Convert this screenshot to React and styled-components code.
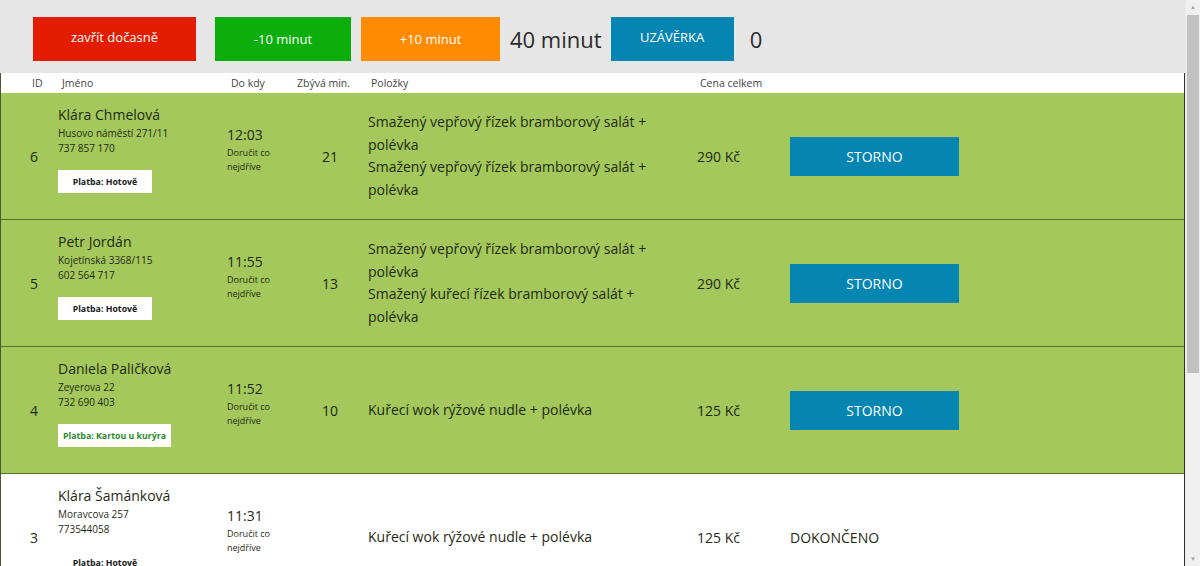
import styled, { createGlobalStyle } from "styled-components";

const GlobalStyle = createGlobalStyle`
  html, body {
    margin: 0;
    padding: 0;
    background: #ffffff;
    font-family: 'Open Sans', 'Noto Sans', sans-serif;
    color: #222;
  }
`;

const objednavky = [
  {
    id: 6,
    jmeno: "Klára Chmelová",
    adresa: "Husovo náměstí 271/11",
    telefon: "737 857 170",
    platba: "Hotově",
    cas: "12:03",
    zbyva: 21,
    polozky: [
      "Smažený vepřový řízek bramborový salát + polévka",
      "Smažený vepřový řízek bramborový salát + polévka",
    ],
    cena: "290 Kč",
    aktivni: true,
  },
  {
    id: 5,
    jmeno: "Petr Jordán",
    adresa: "Kojetínská 3368/115",
    telefon: "602 564 717",
    platba: "Hotově",
    cas: "11:55",
    zbyva: 13,
    polozky: [
      "Smažený vepřový řízek bramborový salát + polévka",
      "Smažený kuřecí řízek bramborový salát + polévka",
    ],
    cena: "290 Kč",
    aktivni: true,
  },
  {
    id: 4,
    jmeno: "Daniela Paličková",
    adresa: "Zeyerova 22",
    telefon: "732 690 403",
    platba: "Kartou u kurýra",
    karta: true,
    cas: "11:52",
    zbyva: 10,
    polozky: ["Kuřecí wok rýžové nudle + polévka"],
    cena: "125 Kč",
    aktivni: true,
  },
  {
    id: 3,
    jmeno: "Klára Šamánková",
    adresa: "Moravcova 257",
    telefon: "773544058",
    platba: "Hotově",
    cas: "11:31",
    zbyva: "",
    polozky: ["Kuřecí wok rýžové nudle + polévka"],
    cena: "125 Kč",
    aktivni: false,
  },
];

export default function App() {
  return (
    <>
      <GlobalStyle />
      <Stranka>
        <Obsah>
          <Horni>
            <TlacitkoHorni $barva="#e31c02" $sirka={163} $mezera={19} $posun={4}>
              zavřít dočasně
            </TlacitkoHorni>
            <TlacitkoHorni $barva="#0bae0b" $sirka={136} $mezera={10}>-10 minut</TlacitkoHorni>
            <TlacitkoHorni $barva="#ff8b00" $sirka={139} $mezera={10}>+10 minut</TlacitkoHorni>
            <VelkyText $mezera={9}>40 minut</VelkyText>
            <TlacitkoHorni $barva="#0485b2" $sirka={123} $mezera={16} $posun={5}>
              UZÁVĚRKA
            </TlacitkoHorni>
            <VelkyText>0</VelkyText>
          </Horni>
          <Tabulka>
            <Hlavicka>
              <span>ID</span>
              <span>Jméno</span>
              <span>Do kdy</span>
              <span>Zbývá min.</span>
              <span>Položky</span>
              <span>Cena celkem</span>
              <span></span>
            </Hlavicka>
            {objednavky.map((o) => (
              <Radek key={o.id} $aktivni={o.aktivni}>
                <Bunka>{o.id}</Bunka>
                <Zakaznik>
                  <h4>{o.jmeno}</h4>
                  <p>{o.adresa}</p>
                  <p>{o.telefon}</p>
                  <Platba $karta={o.karta}>Platba: {o.platba}</Platba>
                </Zakaznik>
                <Cas>
                  <strong>{o.cas}</strong>
                  <small>Doručit co<br />nejdříve</small>
                </Cas>
                <Zbyva>{o.zbyva}</Zbyva>
                <Polozky>
                  {o.polozky.map((p, i) => (
                    <p key={i}>{p}</p>
                  ))}
                </Polozky>
                <Bunka>{o.cena}</Bunka>
                <Bunka>
                  {o.aktivni ? <Storno>STORNO</Storno> : <Stav>DOKONČENO</Stav>}
                </Bunka>
              </Radek>
            ))}
          </Tabulka>
        </Obsah>
        <Posuvnik>
          <Sipka>▲</Sipka>
          <Jezdec />
          <Sipka $dole>▼</Sipka>
        </Posuvnik>
      </Stranka>
    </>
  );
}

const Stranka = styled.div`
  display: flex;
  height: 100vh;
  overflow: hidden;
`;

const Obsah = styled.div`
  flex: 1;
  min-width: 0;
`;

const Posuvnik = styled.div`
  width: 14px;
  display: flex;
  flex-direction: column;
  background: #f0f0f0;
  border-left: 1px solid #e8e8e8;
`;

const Sipka = styled.div`
  height: 14px;
  font-size: 6px;
  color: #a3a3a3;
  display: flex;
  align-items: center;
  justify-content: center;
  margin-top: ${(p) => (p.$dole ? "auto" : "0")};
`;

const Jezdec = styled.div`
  height: 358px;
  margin: 1px 1px 0 1px;
  background: #c1c1c1;
`;

const Horni = styled.div`
  display: flex;
  align-items: center;
  height: 73px;
  padding: 5px 0 0 33px;
  background-color: #e6e6e6;
  box-sizing: border-box;
`;

const TlacitkoHorni = styled.button`
  width: ${(p) => p.$sirka}px;
  height: 44px;
  margin-right: ${(p) => p.$mezera || 0}px;
  border: none;
  border-radius: 0;
  background-color: ${(p) => p.$barva};
  color: #ffffff;
  font-family: 'Open Sans', 'Noto Sans', sans-serif;
  font-size: 13px;
  padding: 0 0 ${(p) => p.$posun || 0}px;
`;

const VelkyText = styled.span`
  font-size: 22px;
  color: #2b2b2b;
  margin-right: ${(p) => p.$mezera || 0}px;
`;

const Tabulka = styled.div`
  border-left: 1px solid #4a5a30;
  border-right: 1px solid #333;
`;

const sloupce = `57px 169px 70px 71px 329px 93px 1fr`;

const Hlavicka = styled.div`
  display: grid;
  grid-template-columns: ${sloupce};
  align-items: center;
  height: 20px;
  background: #ffffff;
  font-size: 10.5px;
  color: #444;
  span:first-child { padding-left: 31px; }
  span:nth-child(2) { padding-left: 4px; }
  span:nth-child(3) { padding-left: 4px; }
  span:nth-child(5) { padding-left: 3px; }
  span:nth-child(6) { padding-left: 3px; }
`;

const Radek = styled.div`
  display: grid;
  grid-template-columns: ${sloupce};
  align-items: center;
  height: 127px;
  box-sizing: border-box;
  background-color: ${(p) => (p.$aktivni ? "#a4c85b" : "#ffffff")};
  border-bottom: 1px solid ${(p) => (p.$aktivni ? "#55762a" : "#dddddd")};
  color: #1f2a14;
  font-size: 14px;
`;

const Bunka = styled.div`
  &:first-child { padding-left: 29px; }
`;

const Zakaznik = styled.div`
  align-self: start;
  padding-top: 12px;
  h4 {
    margin: 0 0 1px;
    font-size: 14px;
    font-weight: 400;
    line-height: 20px;
  }
  p {
    margin: 0;
    font-size: 10px;
    line-height: 15px;
  }
`;

const Platba = styled.div`
  display: inline-flex;
  align-items: center;
  justify-content: center;
  box-sizing: border-box;
  min-width: 94px;
  margin-top: 14px;
  height: 23px;
  padding: 0 5px;
  background: #ffffff;
  font-size: 8.8px;
  font-weight: 700;
  color: ${(p) => (p.$karta ? "#2a8b2a" : "#1a1a1a")};
`;

const Cas = styled.div`
  align-self: start;
  padding-top: 32px;
  display: flex;
  flex-direction: column;
  strong {
    font-size: 14px;
    font-weight: 400;
    line-height: 20px;
  }
  small {
    font-size: 9px;
    line-height: 14px;
    margin-top: 1px;
  }
`;

const Zbyva = styled.div`
  padding-left: 25px;
`;

const Polozky = styled.div`
  padding-right: 30px;
  p {
    margin: 0;
    line-height: 22.5px;
  }
`;

const Storno = styled.button`
  width: 169px;
  height: 39px;
  border: none;
  background-color: #0485b2;
  color: #ffffff;
  font-family: 'Open Sans', 'Noto Sans', sans-serif;
  font-size: 14px;
`;

const Stav = styled.span`
  font-size: 14px;
`;
